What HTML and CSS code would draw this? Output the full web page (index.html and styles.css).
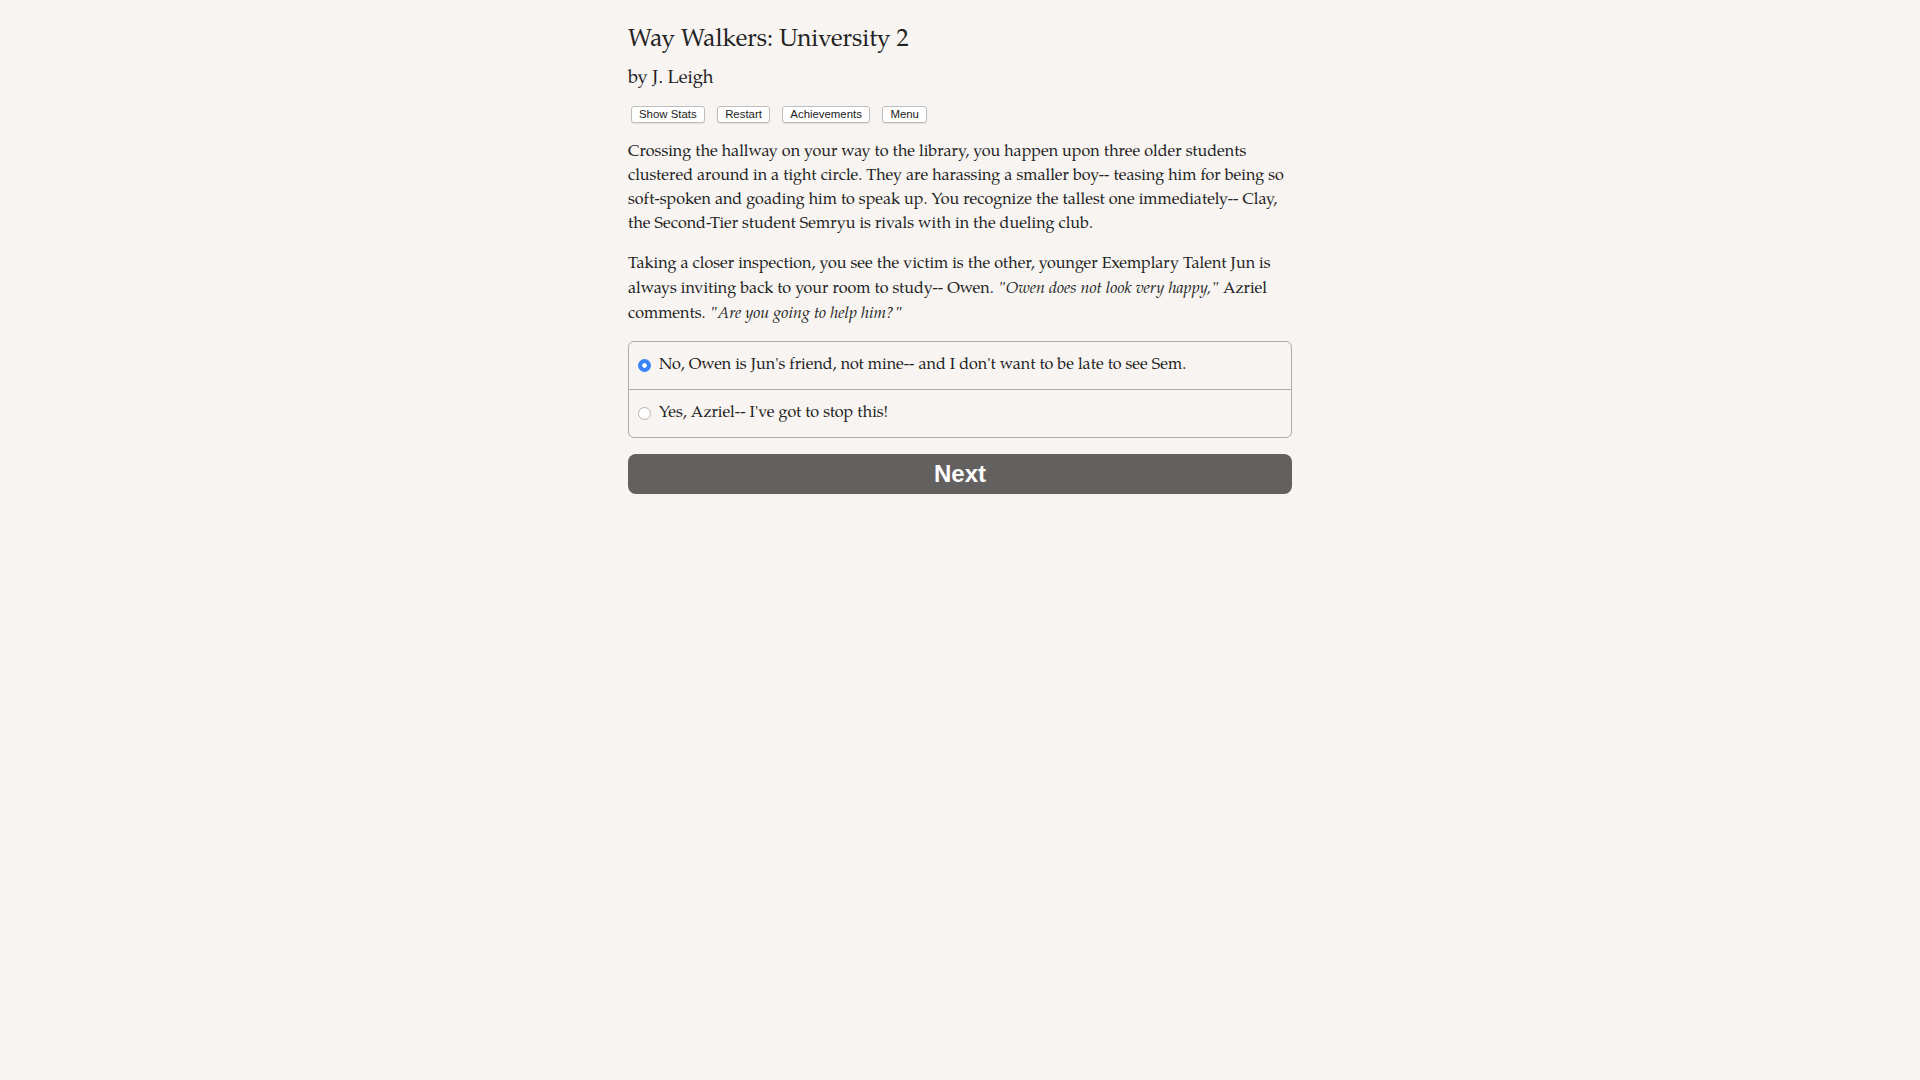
FILE: index.html
```html
<!DOCTYPE html>
<html lang="en">
<head>
<meta charset="utf-8">
<title>Way Walkers: University 2</title>
<link rel="stylesheet" href="styles.css">
</head>
<body>
<div class="container">
  <h1 class="title">Way Walkers: University 2</h1>
  <h2 class="author">by J. Leigh</h2>
  <div class="toolbar">
    <button class="tool-btn">Show Stats</button>
    <button class="tool-btn">Restart</button>
    <button class="tool-btn">Achievements</button>
    <button class="tool-btn">Menu</button>
  </div>
  <div class="story">
    <p>Crossing the hallway on your way to the library, you happen upon three older students clustered around in a tight circle. They are harassing a smaller boy-- teasing him for being so soft-spoken and goading him to speak up. You recognize the tallest one immediately-- Clay, the Second-Tier student Semryu is rivals with in the dueling club.</p>
    <p>Taking a closer inspection, you see the victim is the other, younger Exemplary Talent Jun is always inviting back to your room to study-- Owen. <i>"Owen does not look very happy,"</i> Azriel comments. <i>"Are you going to help him?"</i></p>
  </div>
  <form class="choices">
    <label class="choice">
      <input type="radio" name="choice" class="radio" checked>
      <span>No, Owen is Jun's friend, not mine-- and I don't want to be late to see Sem.</span>
    </label>
    <label class="choice">
      <input type="radio" name="choice" class="radio">
      <span>Yes, Azriel-- I've got to stop this!</span>
    </label>
  </form>
  <button class="next-btn">Next</button>
</div>
</body>
</html>
```

FILE: styles.css
```css
html, body {
  margin: 0;
  padding: 0;
  background: #f7f4f1;
}

body {
  font-family: "Palatino Linotype", Palatino, "Book Antiqua", "TeX Gyre Pagella", "P052", "Liberation Serif", serif;
  color: #222;
}

.container {
  width: 664px;
  margin: 0 auto;
  padding-top: 25px;
}

.title {
  font-size: 24.2px;
  font-weight: normal;
  line-height: 32px;
  margin: 0;
}

.author {
  font-size: 18.3px;
  font-weight: normal;
  line-height: 26px;
  margin: 9px 0 0;
}

.toolbar {
  display: flex;
  gap: 12.5px;
  margin-top: 14px;
  padding-left: 3px;
}

.tool-btn {
  font-family: "Liberation Sans", Arial, sans-serif;
  font-size: 11.4px;
  height: 17px;
  line-height: 15px;
  padding: 0 7px;
  background: #fff;
  color: #1a1a1a;
  border: 1px solid #bdbdbd;
  border-radius: 3px;
  box-shadow: 0 1px 1px rgba(0,0,0,0.08);
}

.story {
  margin-top: 18px;
  font-size: 16.1px;
  line-height: 24px;
}

.story p {
  margin: 0 0 16px;
}

.story p:last-child {
  margin-bottom: 0;
}

.choices {
  margin-top: 14px;
  border: 1px solid #acacac;
  border-radius: 6px;
  overflow: hidden;
}

.choice {
  display: flex;
  align-items: center;
  height: 47px;
  padding-left: 9px;
  font-size: 16.1px;
}

.choice + .choice {
  border-top: 1px solid #acacac;
}

.radio {
  appearance: none;
  -webkit-appearance: none;
  width: 13px;
  height: 13px;
  margin: 0 8px 0 0;
  border-radius: 50%;
  border: 1px solid #b5b5b5;
  background: #fff;
  flex-shrink: 0;
  box-sizing: border-box;
}

.radio:checked {
  border: none;
  background: radial-gradient(circle, #fff 0 2px, #3a82f7 2.5px);
}

.next-btn {
  display: block;
  width: 100%;
  height: 40px;
  margin-top: 16px;
  border: none;
  border-radius: 8px;
  background: #636160;
  color: #fff;
  font-family: "Liberation Sans", Arial, sans-serif;
  font-weight: bold;
  font-size: 24px;
  padding: 0;
}
```
